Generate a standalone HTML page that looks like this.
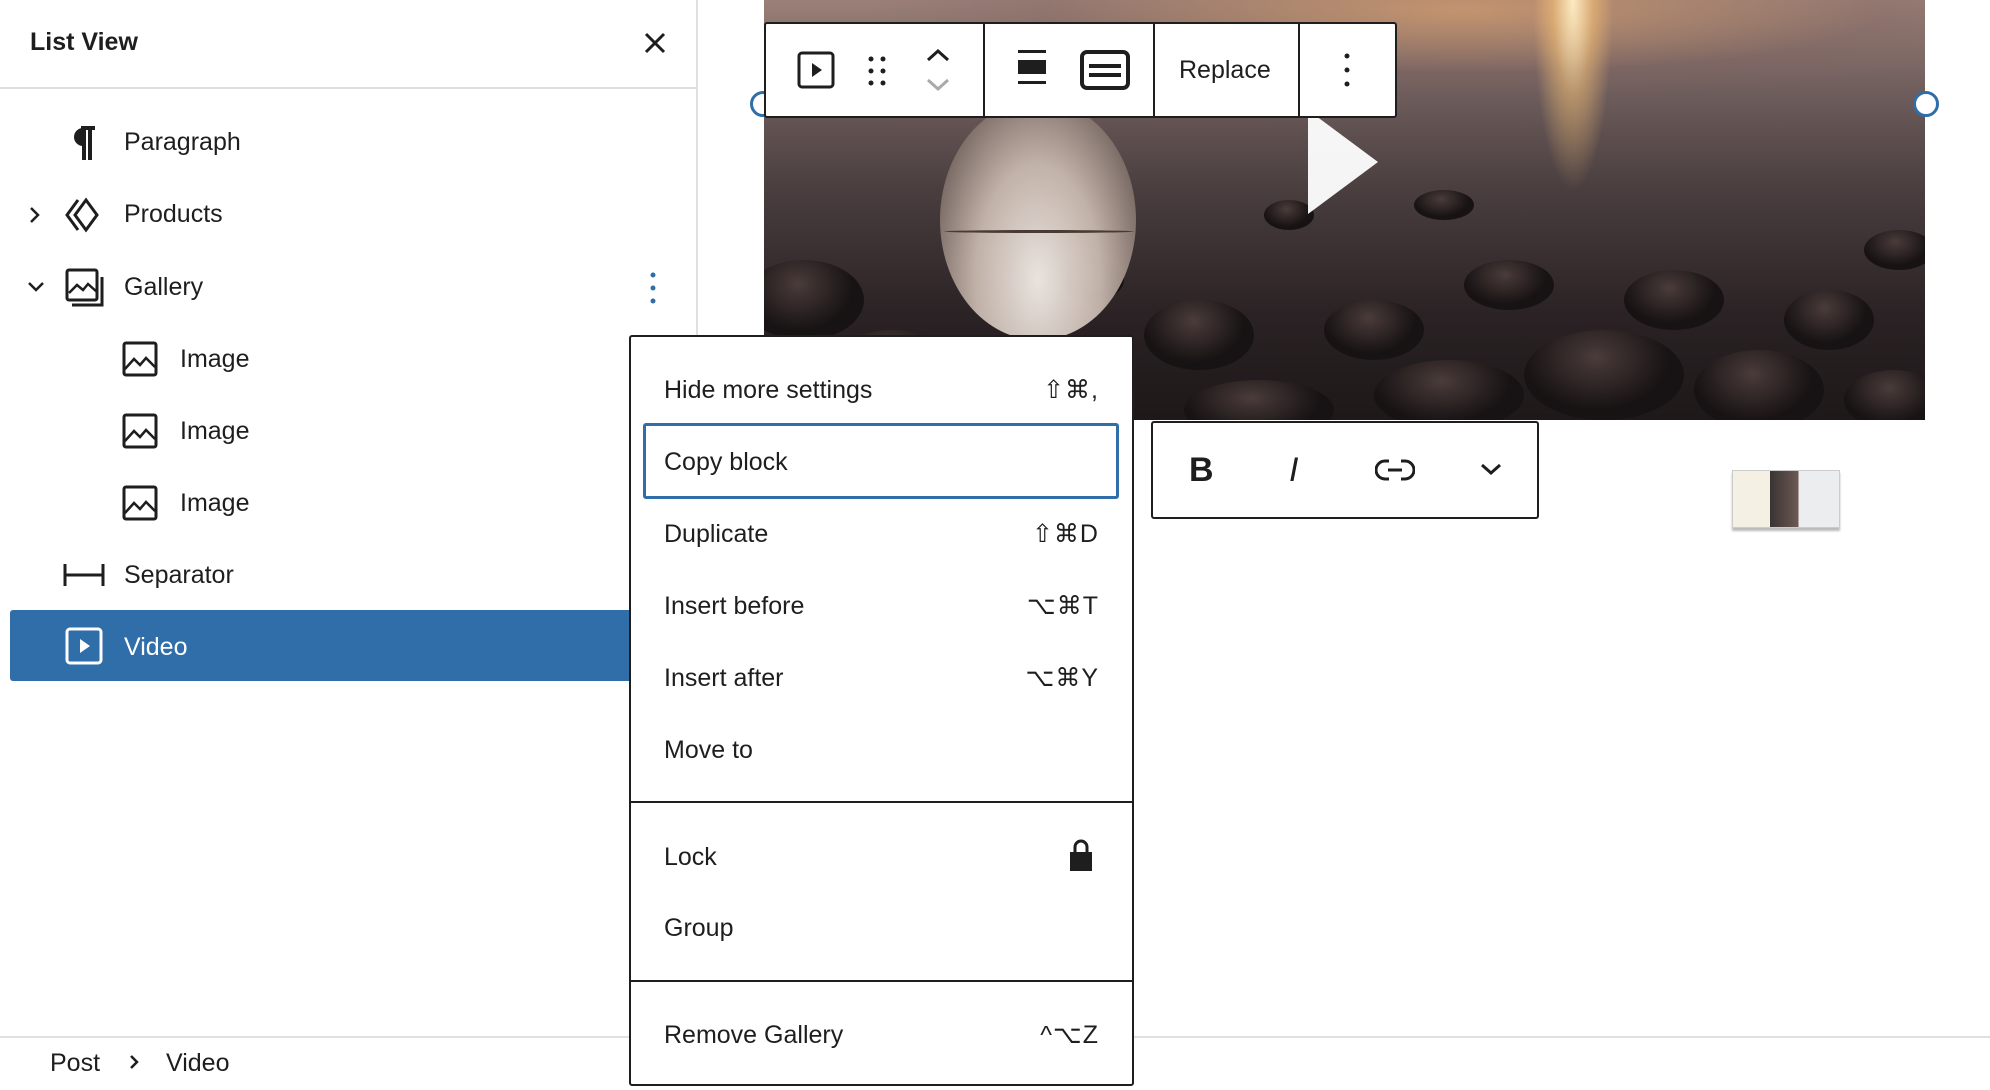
<!DOCTYPE html>
<html><head><meta charset="utf-8"><style>
*{box-sizing:border-box;margin:0;padding:0}
body{width:1990px;height:1090px;overflow:hidden;background:#fff;font-family:"Liberation Sans",sans-serif;color:#1e1e1e;position:relative}
.abs{position:absolute}
.side{left:0;top:0;width:698px;height:1037px;border-right:2px solid #e0e0e0}
.hdr{left:0;top:0;width:698px;height:89px;border-bottom:2px solid #ddd}
.row{position:absolute;font-size:25px;line-height:30px}
.sel{left:10px;top:610px;width:630px;height:71px;background:#2f6ea8;border-radius:3px}
.menu{left:629px;top:335px;width:505px;height:751px;background:#fff;border:2px solid #1e1e1e;border-radius:3px}
.mi{position:absolute;left:33px;right:33px;font-size:25px;line-height:30px}
.mi span{position:absolute;right:0;top:0;letter-spacing:1px}
.tb{background:#fff;border:2px solid #1e1e1e;border-radius:3px}
.rk{position:absolute;border-radius:50%;background:radial-gradient(ellipse at 45% 30%,#4a3c3a,#171213 60%)}
</style></head><body>
<!-- video image -->
<div class="abs" style="left:764px;top:0;width:1161px;height:420px;overflow:hidden;background:
radial-gradient(ellipse 40px 190px at 809px 0px,rgba(255,240,200,.95),rgba(255,200,120,.5) 50%,rgba(0,0,0,0) 100%),
radial-gradient(ellipse 600px 90px at 700px 10px,rgba(200,150,110,.9),rgba(130,100,95,.3) 70%,rgba(0,0,0,0)),
linear-gradient(#9a8078 0%,#6e5d5c 22%,#4a3e3f 45%,#2a2224 75%,#1e1819 100%)">
<div class="rk" style="left:-20px;top:260px;width:120px;height:80px"></div>
<div class="rk" style="left:60px;top:330px;width:140px;height:90px"></div>
<div class="rk" style="left:200px;top:370px;width:160px;height:70px"></div>
<div class="rk" style="left:380px;top:300px;width:110px;height:70px"></div>
<div class="rk" style="left:420px;top:380px;width:150px;height:60px"></div>
<div class="rk" style="left:500px;top:200px;width:50px;height:30px"></div>
<div class="rk" style="left:560px;top:300px;width:100px;height:60px"></div>
<div class="rk" style="left:610px;top:360px;width:150px;height:70px"></div>
<div class="rk" style="left:700px;top:260px;width:90px;height:50px"></div>
<div class="rk" style="left:760px;top:330px;width:160px;height:90px"></div>
<div class="rk" style="left:860px;top:270px;width:100px;height:60px"></div>
<div class="rk" style="left:930px;top:350px;width:130px;height:80px"></div>
<div class="rk" style="left:1020px;top:290px;width:90px;height:60px"></div>
<div class="rk" style="left:1080px;top:370px;width:100px;height:60px"></div>
<div class="rk" style="left:1100px;top:230px;width:70px;height:40px"></div>
<div class="rk" style="left:650px;top:190px;width:60px;height:30px"></div>
<div class="rk" style="left:300px;top:260px;width:60px;height:40px"></div>
<div class="abs" style="left:176px;top:100px;width:196px;height:240px;border-radius:50%;background:radial-gradient(ellipse at 50% 75%,#f2ede8,#c8b8ae 45%,#6d5d58 85%,#3a2f2f 100%);opacity:.95"></div>
<div class="abs" style="left:180px;top:230px;width:190px;height:3px;background:#4a3a34;border-radius:50%"></div>
<div class="abs" style="left:544px;top:110px;width:0;height:0;border-left:70px solid #fff;border-top:52px solid transparent;border-bottom:52px solid transparent;opacity:.95"></div>
</div>
<div class="abs" style="left:750px;top:91px;width:26px;height:26px;border:3px solid #2f6ea8;border-radius:50%;background:#fff"></div>
<div class="abs" style="left:1913px;top:91px;width:26px;height:26px;border:3px solid #2f6ea8;border-radius:50%;background:#fff"></div>
<!-- block toolbar -->
<div class="abs tb" style="left:764px;top:22px;width:633px;height:96px">
<div class="abs" style="left:217px;top:0;width:2px;height:92px;background:#1e1e1e"></div>
<div class="abs" style="left:387px;top:0;width:2px;height:92px;background:#1e1e1e"></div>
<div class="abs" style="left:532px;top:0;width:2px;height:92px;background:#1e1e1e"></div>
<svg class="abs" style="left:30px;top:26px" width="40" height="40" viewBox="0 0 40 40"><rect x="3" y="3" width="34" height="34" rx="3" fill="none" stroke="#1e1e1e" stroke-width="3"/><path d="M16 13l10 7-10 7z" fill="#1e1e1e"/></svg>
<svg class="abs" style="left:100px;top:30px" width="24" height="34"><g fill="#1e1e1e"><circle cx="5" cy="5" r="2.5"/><circle cx="17" cy="5" r="2.5"/><circle cx="5" cy="17" r="2.5"/><circle cx="17" cy="17" r="2.5"/><circle cx="5" cy="29" r="2.5"/><circle cx="17" cy="29" r="2.5"/></g></svg>
<svg class="abs" style="left:157px;top:22px" width="30" height="50"><path d="M5 14l10-9 10 9" fill="none" stroke="#1e1e1e" stroke-width="3"/><path d="M5 34l10 9 10-9" fill="none" stroke="#aaa" stroke-width="3"/></svg>
<svg class="abs" style="left:250px;top:26px" width="32" height="40"><rect x="2" y="0" width="28" height="3" fill="#1e1e1e"/><rect x="2" y="10" width="28" height="14" fill="#1e1e1e"/><rect x="2" y="31" width="28" height="3" fill="#1e1e1e"/></svg>
<svg class="abs" style="left:314px;top:26px" width="50" height="40"><rect x="2" y="2" width="46" height="36" rx="5" fill="none" stroke="#1e1e1e" stroke-width="4"/><rect x="9" y="14" width="32" height="4" fill="#1e1e1e"/><rect x="9" y="23" width="32" height="4" fill="#1e1e1e"/></svg>
<div class="abs" style="left:413px;top:32px;font-size:25px">Replace</div>
<svg class="abs" style="left:577px;top:28px" width="8" height="36"><g fill="#1e1e1e"><circle cx="4" cy="4" r="2.5"/><circle cx="4" cy="18" r="2.5"/><circle cx="4" cy="32" r="2.5"/></g></svg>
</div>
<!-- format toolbar -->
<div class="abs tb" style="left:1151px;top:421px;width:388px;height:98px">
<div class="abs" style="left:36px;top:28px;font-size:34px;font-weight:bold">B</div>
<div class="abs" style="left:136px;top:28px;font-size:34px;font-style:italic">I</div>
<svg class="abs" style="left:222px;top:34px" width="40" height="26"><path d="M14 4h-4a9 9 0 000 18h4M26 4h4a9 9 0 010 18h-4M13 13h14" fill="none" stroke="#1e1e1e" stroke-width="3"/></svg>
<svg class="abs" style="left:326px;top:38px" width="24" height="16"><path d="M3 4l9 8 9-8" fill="none" stroke="#1e1e1e" stroke-width="3"/></svg>
</div>
<div class="abs" style="left:1732px;top:470px;width:108px;height:58px;background:linear-gradient(90deg,#f4f1e4 35%,#3a3433 35%,#6d5a55 62%,#ebedef 62%);border:1px solid #ccc;box-shadow:0 3px 2px #bbb"></div>
<!-- sidebar -->
<div class="abs side"></div>
<div class="abs hdr"></div>
<div class="abs" style="left:30px;top:28px;font-size:25px;font-weight:bold">List View</div>
<svg class="abs" style="left:643px;top:31px" width="24" height="24"><path d="M3 3l18 18M21 3L3 21" stroke="#1e1e1e" stroke-width="3"/></svg>
<div class="abs sel"></div>
<svg class="abs" style="left:68px;top:124px" width="30" height="38"><path d="M13 4h14M16 4v32M22 4v32" stroke="#1e1e1e" stroke-width="4" fill="none"/><path d="M15 4a8 8 0 000 18z" fill="#1e1e1e"/></svg>
<div class="row" style="left:124px;top:127px">Paragraph</div>
<svg class="abs" style="left:28px;top:205px" width="14" height="20"><path d="M3 3l7 7-7 7" fill="none" stroke="#1e1e1e" stroke-width="2.5"/></svg>
<svg class="abs" style="left:64px;top:197px" width="42" height="36"><path d="M14 3L3 18l11 15M22 3L11 18l11 15l11-15z" fill="none" stroke="#1e1e1e" stroke-width="3"/></svg>
<div class="row" style="left:124px;top:199px">Products</div>
<svg class="abs" style="left:26px;top:280px" width="20" height="14"><path d="M3 3l7 7 7-7" fill="none" stroke="#1e1e1e" stroke-width="2.5"/></svg>
<svg class="abs" style="left:64px;top:267px" width="42" height="42"><rect x="3" y="3" width="30" height="30" rx="2" fill="none" stroke="#1e1e1e" stroke-width="3"/><path d="M5 26l8-8 6 5 5-6 9 8" fill="none" stroke="#1e1e1e" stroke-width="2.5"/><path d="M8 38h30V10" fill="none" stroke="#1e1e1e" stroke-width="3"/></svg>
<div class="row" style="left:124px;top:272px">Gallery</div>
<svg class="abs" style="left:648px;top:270px" width="10" height="36"><g fill="#2f6ea8"><circle cx="5" cy="5" r="2.5"/><circle cx="5" cy="18" r="2.5"/><circle cx="5" cy="31" r="2.5"/></g></svg>
<svg class="abs" style="left:122px;top:341px" width="36" height="36"><rect x="2" y="2" width="32" height="32" rx="2" fill="none" stroke="#1e1e1e" stroke-width="3"/><path d="M3 28l9-10 6 6 6-7 9 9" fill="none" stroke="#1e1e1e" stroke-width="2.5"/></svg>
<div class="row" style="left:180px;top:344px">Image</div>
<svg class="abs" style="left:122px;top:413px" width="36" height="36"><rect x="2" y="2" width="32" height="32" rx="2" fill="none" stroke="#1e1e1e" stroke-width="3"/><path d="M3 28l9-10 6 6 6-7 9 9" fill="none" stroke="#1e1e1e" stroke-width="2.5"/></svg>
<div class="row" style="left:180px;top:416px">Image</div>
<svg class="abs" style="left:122px;top:485px" width="36" height="36"><rect x="2" y="2" width="32" height="32" rx="2" fill="none" stroke="#1e1e1e" stroke-width="3"/><path d="M3 28l9-10 6 6 6-7 9 9" fill="none" stroke="#1e1e1e" stroke-width="2.5"/></svg>
<div class="row" style="left:180px;top:488px">Image</div>
<svg class="abs" style="left:63px;top:562px" width="42" height="26"><path d="M2 2v22M40 2v22M2 13h38" stroke="#1e1e1e" stroke-width="3" fill="none"/></svg>
<div class="row" style="left:124px;top:560px">Separator</div>
<svg class="abs" style="left:65px;top:627px" width="38" height="38"><rect x="2" y="2" width="34" height="34" rx="3" fill="none" stroke="#fff" stroke-width="3"/><path d="M15 12l10 7-10 7z" fill="#fff"/></svg>
<div class="row" style="left:124px;top:632px;color:#fff">Video</div>
<!-- breadcrumb -->
<div class="abs" style="left:0;top:1036px;width:1990px;height:2px;background:#e0e0e0"></div>
<div class="abs" style="left:50px;top:1049px;font-size:25px">Post</div>
<svg class="abs" style="left:128px;top:1053px" width="12" height="18"><path d="M3 3l6 6-6 6" fill="none" stroke="#1e1e1e" stroke-width="2.5"/></svg>
<div class="abs" style="left:166px;top:1049px;font-size:25px">Video</div>
<!-- menu -->
<div class="abs menu">
<div class="mi" style="top:38px">Hide more settings<span>⇧⌘,</span></div>
<div class="abs" style="left:12px;top:86px;width:476px;height:76px;border:3px solid #2f6ea8;border-radius:3px"></div>
<div class="mi" style="top:110px">Copy block</div>
<div class="mi" style="top:182px">Duplicate<span>⇧⌘D</span></div>
<div class="mi" style="top:254px">Insert before<span>⌥⌘T</span></div>
<div class="mi" style="top:326px">Insert after<span>⌥⌘Y</span></div>
<div class="mi" style="top:398px">Move to</div>
<div class="abs" style="left:0;top:464px;width:501px;height:2px;background:#1e1e1e"></div>
<div class="mi" style="top:505px">Lock</div>
<svg class="abs" style="left:437px;top:500px" width="26" height="36"><path d="M7 15V10a6 6 0 0112 0v5" fill="none" stroke="#1e1e1e" stroke-width="3"/><rect x="2" y="15" width="22" height="19" fill="#1e1e1e"/></svg>
<div class="mi" style="top:576px">Group</div>
<div class="abs" style="left:0;top:643px;width:501px;height:2px;background:#1e1e1e"></div>
<div class="mi" style="top:683px">Remove Gallery<span>^⌥Z</span></div>
</div>
</body></html>
